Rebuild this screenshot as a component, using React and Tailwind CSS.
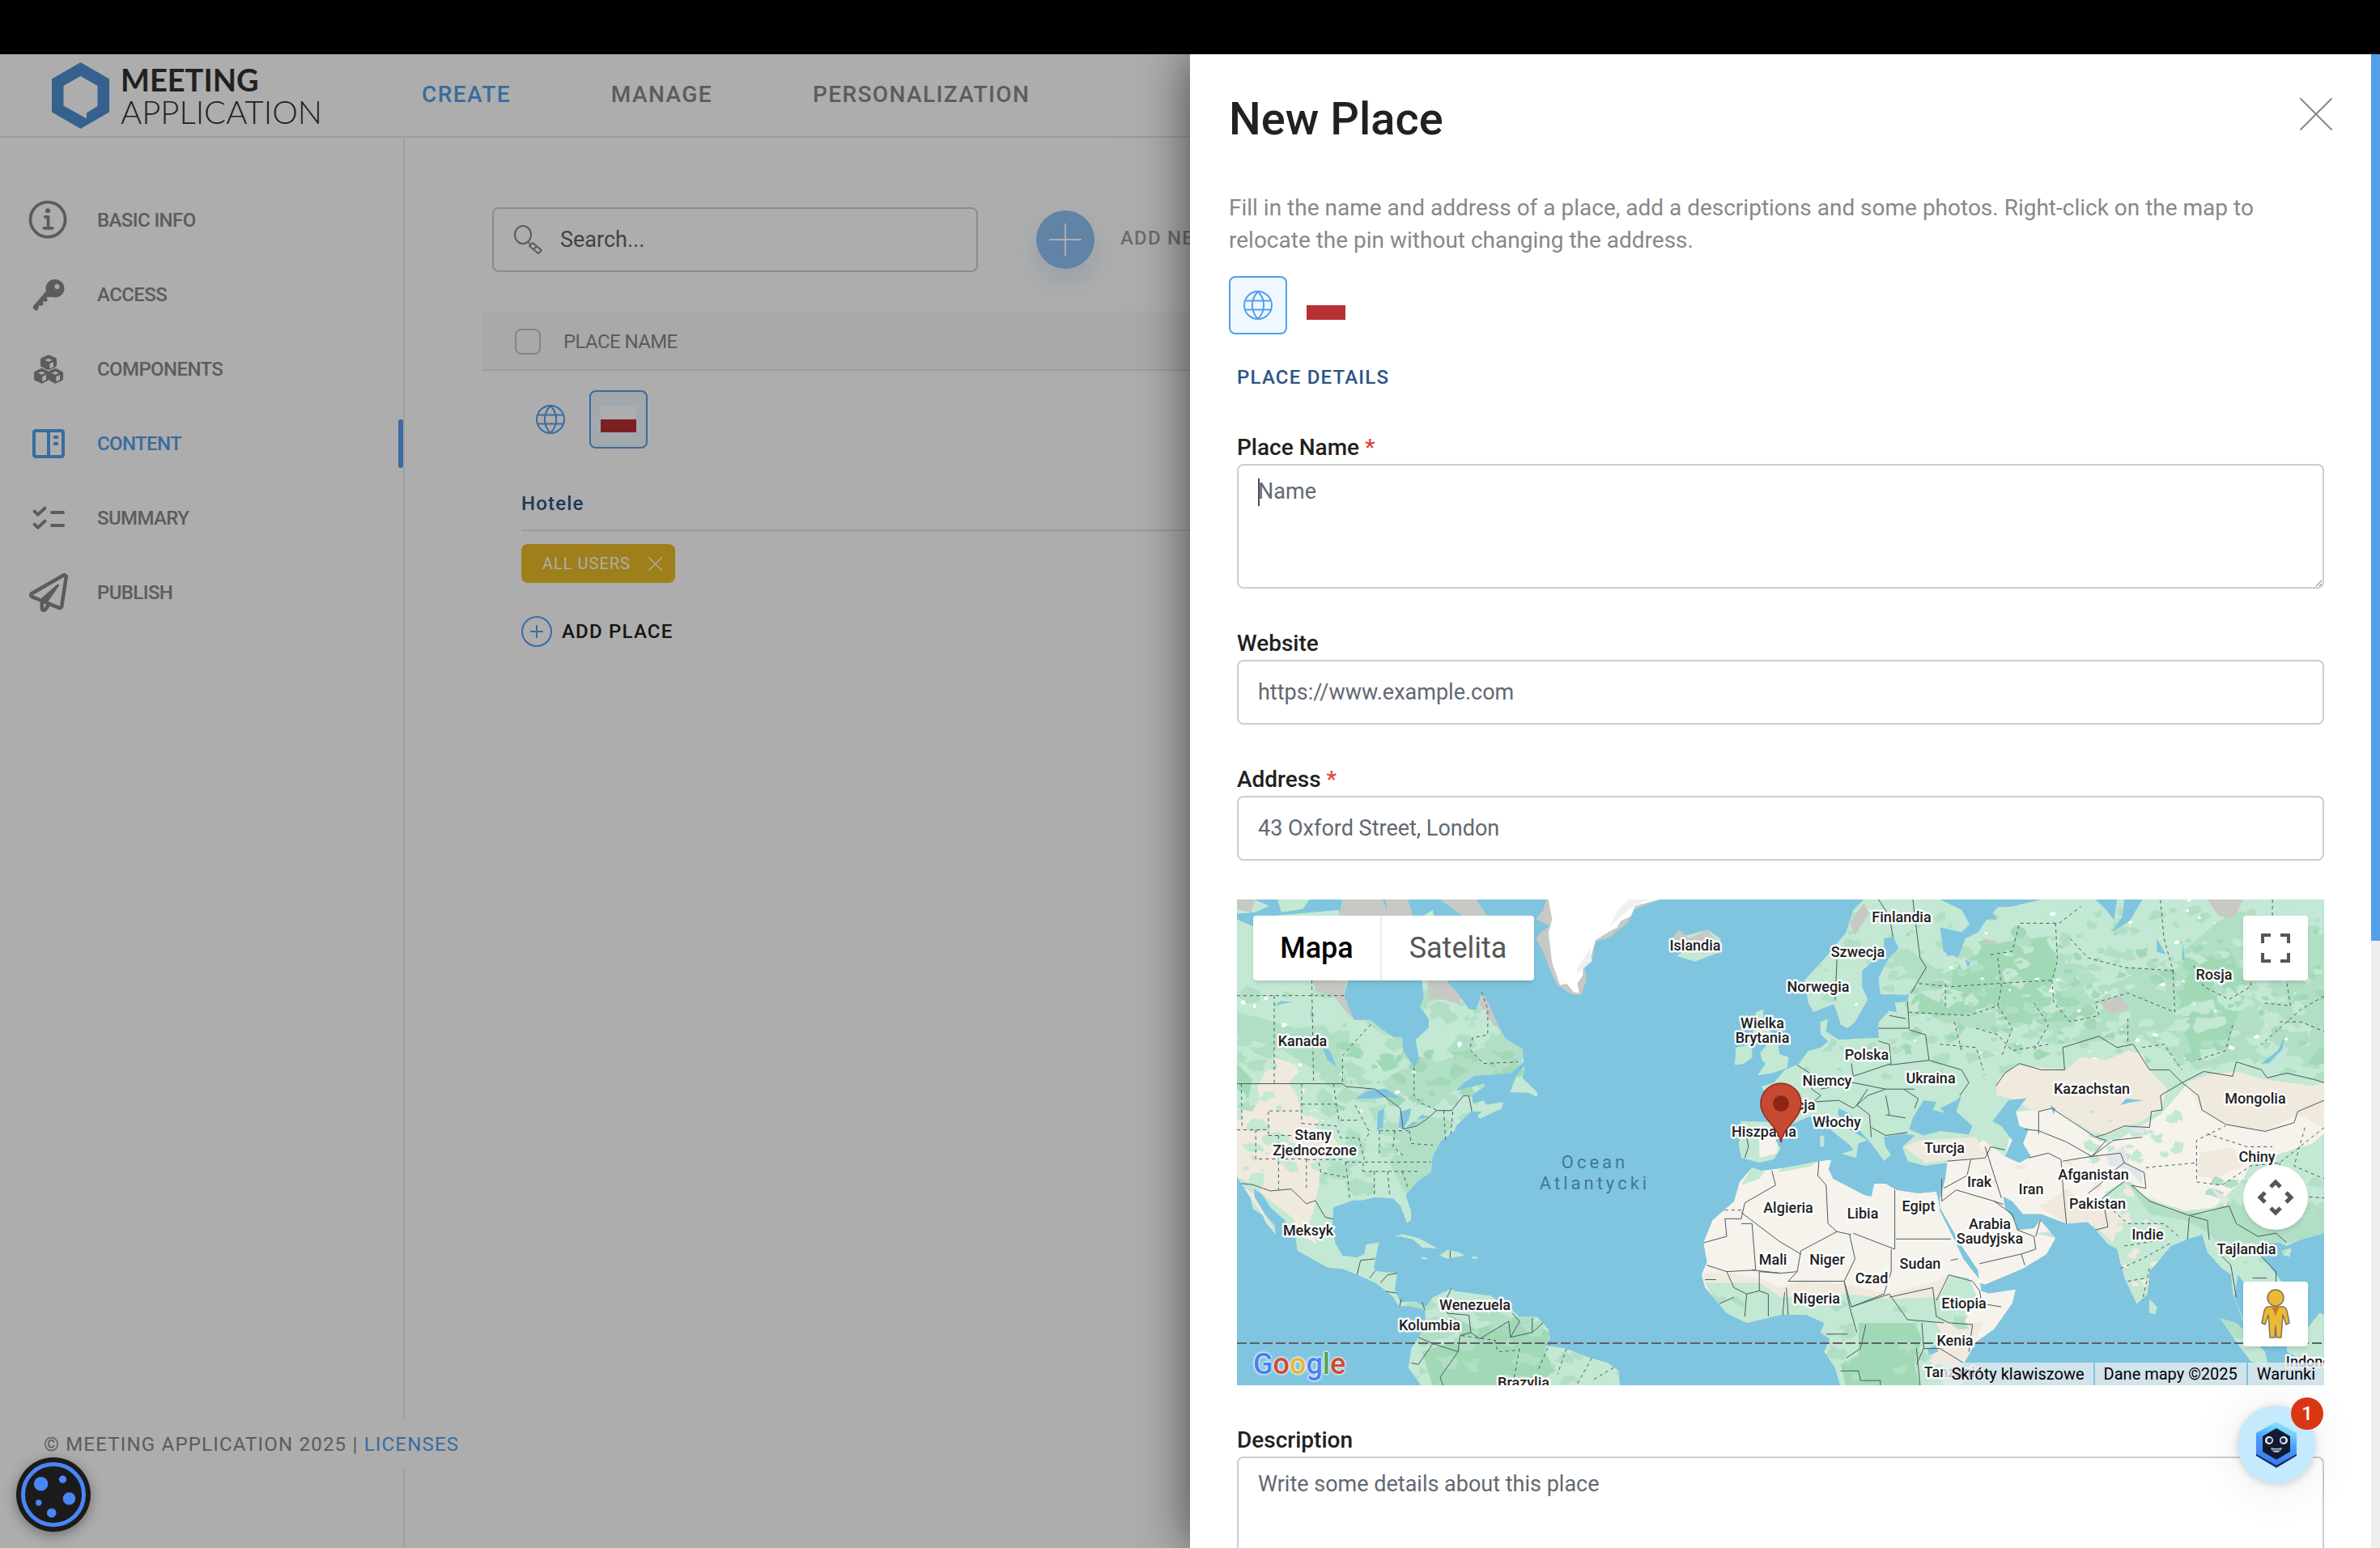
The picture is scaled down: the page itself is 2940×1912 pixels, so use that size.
import React from "react";
import { IoInformationCircleOutline, IoKey } from "react-icons/io5";
import { FaRegPaperPlane } from "react-icons/fa";
import { BiBookContent } from "react-icons/bi";

const ChecksIcon = () => (
    <svg width="40" height="30" viewBox="0 0 120 90" fill="none" stroke="currentColor" strokeWidth="12" strokeLinecap="round" strokeLinejoin="round">
        <path d="M8 20l12 12 26-24M8 68l12 12 26-24" />
        <path d="M72 24h42M72 72h42" />
    </svg>
);

const CubesIcon = () => (
    <svg width="36" height="36" viewBox="0 0 108 108" fill="currentColor" fillRule="evenodd">
        <path d="M50 2q4-2 8 0l22 10q4 2 4 6v22q0 4-4 6L58 56q-4 2-8 0L28 46q-4-2-4-6V18q0-4 4-6zM40 20l14 6 14-6-14-6zM58 34v18l14-7V27z" />
        <path d="M25 52q4-2 8 0l18 9q3 2 3 5v24q0 4-3 6l-18 10q-4 2-8 0L4 96q-4-2-4-6V68q0-4 4-6zM15 68l13 6 14-6-14-6zM31 82v18l14-7V75z" />
        <path d="M75 52q4-2 8 0l21 10q4 2 4 6v22q0 4-4 6l-21 10q-4 2-8 0L57 96q-3-2-3-6V66q0-3 3-5zM65 68l14 6 13-6-13-6zM82 82v18l14-7V75z" />
    </svg>
);

const GlobeIcon = () => (
    <svg width="38" height="38" viewBox="0 0 38 38" fill="none" stroke="currentColor" strokeWidth="2">
        <circle cx="19" cy="19" r="17" />
        <path d="M19 2C9.500 12 9.500 26 19 36M19 2c9.500 10 9.500 24 0 34M3.500 13.500h31M3.500 24.500h31" />
    </svg>
);

const SearchIcon = () => (
    <svg width="36" height="36" viewBox="0 0 36 36" fill="none" stroke="currentColor" strokeWidth="2" strokeLinejoin="round">
        <ellipse cx="12" cy="12" rx="10" ry="11" />
        <path d="M18 20l3 4M20 26l4-4 11 9-4 4zM25 30l4-4" />
    </svg>
);

const CloseIcon = ({ size, stroke }) => (
    <svg width={size} height={size} viewBox="0 0 40 40" fill="none" stroke="currentColor" strokeWidth={stroke} strokeLinecap="round">
        <path d="M1 1l38 38M39 1L1 39" />
    </svg>
);

const Logo = () => (
    <a href="#" className="flex w-[457px] shrink-0 items-center gap-[14px] text-[#323232]">
        <svg width="71" height="82" viewBox="0 0 71 82">
            <path fill="#4e90d2" fillRule="evenodd" d="M35.500 0L71 20.500v41L35.500 82 0 61.500v-41zM35.500 17L14.500 29v24.500L43 69.500v-7L56.500 54V29z" />
        </svg>
        <span className="flex flex-col font-[Lato,sans-serif] leading-10">
            <span className="text-[38px] font-bold">MEETING</span>
            <span className="text-[40px] font-light">APPLICATION</span>
        </span>
    </a>
);

const NAV = [
    { label: "CREATE", active: true },
    { label: "MANAGE" },
    { label: "PERSONALIZATION" },
];

const MENU = [
    { label: "BASIC INFO", icon: <IoInformationCircleOutline size={60} className="shrink-0" /> },
    { label: "ACCESS", icon: <IoKey size={49} /> },
    { label: "COMPONENTS", icon: <CubesIcon /> },
    { label: "CONTENT", icon: <BiBookContent size={48} />, active: true },
    { label: "SUMMARY", icon: <ChecksIcon /> },
    { label: "PUBLISH", icon: <FaRegPaperPlane size={48} /> },
];

const Header = () => (
    <header className="flex h-[103px] shrink-0 items-center border-b-2 border-[#e6e6e6] pl-16">
        <Logo />
        <nav className="flex gap-31 pb-0.5 text-[28px] font-medium tracking-wider text-[#888888]">
            {NAV.map((item) => (
                <a key={item.label} href="#" className={item.active ? "text-[#539fea]" : ""}>{item.label}</a>
            ))}
        </nav>
    </header>
);

const Sidebar = () => (
    <aside className="w-[500px] shrink-0 border-r-2 border-[#ebebeb] pt-[72px]">
        <ul className="flex flex-col gap-8">
            {MENU.map((item) => (
                <li key={item.label}>
                    <a href="#" className={item.active ? "flex h-[60px] items-center justify-between text-[#539fea]" : "flex h-[60px] items-center justify-between text-[#888888]"}>
                        <span className="flex items-center gap-9 pl-9 text-2xl font-medium tracking-tight">
                            <span className="flex w-12 justify-center">{item.icon}</span>
                            {item.label}
                        </span>
                        {item.active && <span className="h-[60px] w-1.5 rounded-full bg-[#539fea]"></span>}
                    </a>
                </li>
            ))}
        </ul>
    </aside>
);

const Places = () => (
    <main className="min-w-0 flex-1 pt-[86px] pl-24">
        <div className="flex items-center pl-3">
            <label className="flex h-20 w-[600px] items-center gap-[22px] rounded-lg border-2 border-[#c8ced3] pl-6 text-[#888888]">
                <SearchIcon />
                <input type="text" aria-label="Search" placeholder="Search..." className="min-w-0 flex-1 text-[27px] outline-none placeholder:text-[#5f646d]" />
            </label>
            <button aria-label="Add" className="ml-[72px] flex size-[72px] items-center justify-center rounded-full bg-[#8fc2f3] text-white shadow-[0_16px_32px_rgba(83,159,234,0.2)]">
                <svg width="40" height="40" viewBox="0 0 40 40" stroke="currentColor" strokeWidth="2"><path d="M20 0v40M0 20h40" /></svg>
            </button>
            <span className="ml-8 pb-1 text-2xl font-medium tracking-wider whitespace-nowrap text-[#a0a0a0]">ADD NEW</span>
        </div>

        <table className="mt-12 w-full border-collapse text-left">
            <thead>
                <tr className="h-[73px] border-b-2 border-[#e6e6e6] bg-[#f9f9f9]">
                    <th className="w-[100px] pt-1 pl-10">
                        <input type="checkbox" aria-label="Select all" className="block size-8 appearance-none rounded-lg border-2 border-[#c5c5c5]" />
                    </th>
                    <th className="pt-1 text-2xl font-normal tracking-tight text-[#888888]">PLACE NAME</th>
                </tr>
            </thead>
            <tbody>
                <tr>
                    <td colSpan={2} className="pt-6 pl-12">
                        <div className="flex gap-3">
                            <button aria-label="Default language" className="flex size-[72px] items-center justify-center text-[#539fea]"><GlobeIcon /></button>
                            <button aria-label="Polski" className="flex size-[72px] items-center justify-center rounded-lg border-2 border-[#539fea] bg-[#f0f8ff]">
                                <span className="flex h-8 w-11 flex-col justify-end bg-white"><span className="h-4 bg-[#b72e34]"></span></span>
                            </button>
                        </div>
                        <h2 className="mt-[52px] border-b-2 border-[#e6e6e6] pb-4 text-2xl leading-8 font-medium tracking-wider text-[#2c5585]">Hotele</h2>
                        <span className="mt-4 flex h-12 w-[190px] items-center justify-between rounded-lg bg-[#ebbc28] pr-4 pl-[26px] text-xl tracking-wider text-white">
                            ALL USERS
                            <button aria-label="Remove"><CloseIcon size={17} stroke={3} /></button>
                        </span>
                        <button className="mt-10 flex h-10 items-center gap-3 text-2xl font-medium tracking-wider text-[#212121]">
                            <svg width="38" height="38" viewBox="0 0 38 38" fill="none" stroke="#539fea" strokeWidth="2"><circle cx="19" cy="19" r="18" /><path d="M19 11v16M11 19h16" /></svg>
                            ADD PLACE
                        </button>
                    </td>
                </tr>
            </tbody>
        </table>
    </main>
);

// Coastlines, west half and east half use their own origin
const AMERICA = "M18 90L60 110 120 78 300 60 325 280 315 330 342 403 388 403 415 430 452 458 475 458 478 500 508 553 522 530 512 465 548 428 548 400 525 365 535 335 530 290 530 80 560 60 600 285 635 330 660 370 680 372 695 318 715 355 745 430 760 460 808 495 812 535 775 570 720 575 675 578 640 605 625 625 700 603 705 610 668 640 672 665 700 655 708 668 755 660 752 680 690 713 683 705 695 690 665 690 625 735 620 750 580 785 560 830 555 880 520 905 485 950 500 1000 500 1030 488 1038 470 985 450 962 400 958 365 968 340 968 285 990 283 1050 290 1100 310 1140 350 1145 370 1135 375 1105 412 1098 405 1130 398 1175 400 1188 462 1195 455 1245 470 1285 510 1283 540 1300 560 1270 612 1242 620 1250 720 1265 780 1310 798 1330 850 1332 880 1370 885 1400 870 1420 930 1430 985 1455 1045 1475 1075 1500 1078 1550 530 1550 492 1490 500 1430 520 1395 540 1360 538 1310 500 1298 465 1298 450 1270 430 1250 400 1225 350 1200 310 1182 270 1178 185 1125 180 1085 150 1030 110 990 88 950 65 930 68 960 95 1010 122 1045 126 1075 95 1035 90 1015 62 995 55 960 38 930 18 895zM775 625L790 580 815 545 808 585 850 630 848 645 825 632 770 630zM450 1083L475 1072 520 1085 575 1118 530 1115 505 1090 470 1080zM578 1140L600 1122 630 1128 650 1140 600 1150zM525 1145l15 0 8 7-18 0zM668 1143h16v7h-16zM1222 150L1240 122 1260 140 1320 122 1357 150 1350 195 1285 222 1235 205 1250 190 1225 175zM18 28h50l40 20-40 20-50 5zM130 28h90l-20 30-60 10zM310 28h110l20 50H300zM430 28h60l15 50h-70zM580 28h100l30 50h-70z";
const EURASIA = "M-110 835L-118 790-105 750-113 720-30 722 0 728-15 700-20 660-40 640-55 612-20 600 10 560 50 540 75 500 110 490 130 470 110 450 108 410 130 400 125 440 160 465 270 460 270 410 300 375 320 380 315 350 350 345 355 325 275 325 270 270 300 210 325 180 310 145 285 150 285 190 225 250 225 300 240 340 205 410 185 430 165 420 155 380 145 355 90 380 75 350 65 280 130 200 180 130 200 60 230 28H1503V1070L1440 1090 1400 1110 1380 1100 1330 1100 1320 1130 1350 1170 1385 1220 1380 1250 1330 1290 1290 1240 1265 1200 1255 1270 1280 1340 1310 1370 1280 1350 1250 1260 1245 1200 1220 1180 1180 1130 1165 1075 1125 1090 1080 1110 1020 1190 1015 1260 985 1292 950 1210 930 1120 905 1105 870 1060 850 1035 790 1040 720 1010 670 1010 640 970 615 955 620 990 650 1035 655 1060 700 1055 718 1030 760 1085 735 1135 670 1180 565 1230 550 1225 545 1185 500 1110 440 990 440 960 455 900 460 850 400 860 350 845 335 800 370 765 340 760 285 770 290 800 305 825 285 845 250 790 210 740 195 700 160 680 158 700 190 745 240 780 215 790 208 835 165 822 200 810 190 795 130 740 95 700 60 715 30 730-15 780 0 805-20 840-60 850zM1018 1318L1020 1275 1042 1300 1035 1325zM1215 1335L1260 1350 1340 1440 1350 1490 1300 1470 1260 1410zM1400 1400L1455 1370 1490 1318 1503 1325V1480L1440 1465 1400 1440zM108 765h12v35h-12zM110 715l8-5v35l-8-5zM1385 1125l28-10-5 30-18-5zM-58 505L-33 475-8 480-3 510 22 520 17 555-23 570-65 578-43 540-53 530zM-128 545L-125 490-83 480-78 520-103 542zM-70 380L-48 370-50 410-30 430-20 480-60 480-78 440z";
const AFRICA = "M-80 865L-55 875-20 870 15 865 105 845 140 840 132 870 145 900 230 950 250 955 258 915 290 915 320 935 380 945 430 940 437 970 440 1000 480 1090 505 1150 550 1215 555 1250 575 1258 650 1245 640 1290 590 1370 540 1410 520 1450 500 1490 505 1550H165L150 1490 120 1440 135 1400 110 1380 120 1350 70 1325 0 1325-95 1350-150 1320-210 1240-220 1200-205 1160-215 1100-190 1030-130 970-115 910z";
const GREENLAND = "M875 28L1190 28 1160 40 1115 60 1100 100 1050 145 1010 160 1000 220 980 240 985 280 970 325 945 325 905 295 885 250 865 190 845 150 860 130 885 110 845 90 865 60z";

// Pseudo random vegetation patches, the same on every render
const patches = (count, x, y, w, h, size, seed) => {
    let s = seed;
    const next = () => {
        s = (s * 16807) % 2147483647;
        return s / 2147483647;
    };
    let d = "";
    for (let i = 0; i < count; i++) {
        const cx = x + next() * w;
        const cy = y + next() * h;
        const r = size * (0.3 + next());
        for (let k = 0; k < 7; k++) {
            const a = (k / 7) * Math.PI * 2;
            const q = r * (0.35 + next() * 0.9);
            d += (k ? "L" : "M") + Math.round(cx + Math.cos(a) * q * 1.3) + " " + Math.round(cy + Math.sin(a) * q);
        }
        d += "z";
    }
    return d;
};

const MAP_LABELS = [
    ["Kanada", 81, 175], ["Stany", 94, 291], ["Zjednoczone", 96, 310], ["Meksyk", 88, 409],
    ["Wenezuela", 294, 501], ["Kolumbia", 238, 526], ["Brazylia", 354, 597], ["Islandia", 566, 57],
    ["Finlandia", 821, 22], ["Szwecja", 767, 65], ["Norwegia", 718, 108], ["Rosja", 1207, 93],
    ["Wielka", 649, 153], ["Brytania", 649, 171], ["Polska", 778, 192], ["Niemcy", 729, 224],
    ["Ukraina", 857, 221], ["Francja", 685, 254], ["Włochy", 741, 275], ["Hiszpania", 651, 287],
    ["Turcja", 874, 307], ["Kazachstan", 1056, 234], ["Mongolia", 1258, 246], ["Chiny", 1260, 318],
    ["Irak", 917, 349], ["Iran", 981, 358], ["Afganistan", 1058, 340], ["Pakistan", 1063, 376],
    ["Arabia", 930, 401], ["Saudyjska", 930, 419], ["Egipt", 842, 379], ["Libia", 773, 388],
    ["Algieria", 681, 381], ["Indie", 1125, 414], ["Tajlandia", 1247, 432], ["Mali", 662, 445],
    ["Niger", 729, 445], ["Czad", 784, 468], ["Sudan", 844, 450], ["Nigeria", 716, 493],
    ["Etiopia", 898, 499], ["Kenia", 887, 545], ["Tanzania", 885, 584], ["Indonezja", 1335, 571],
];

const WorldMap = () => (
    <svg viewBox="0 0 1343 600" preserveAspectRatio="xMidYMid slice" className="block h-full w-full">
        <defs>
            <clipPath id="america"><path d={AMERICA} /></clipPath>
            <clipPath id="eurasia"><path d={EURASIA} /></clipPath>
            <clipPath id="africa"><path d={AFRICA} /></clipPath>
        </defs>
        <rect width="1343" height="600" fill="#7fc5e0" />

        <g transform="translate(-8 -11) scale(.4464 .3955)">
            <g clipPath="url(#america)">
                <path d={AMERICA} fill="#c3e8d3" />
                <path fill="#b1dfc5" d="M18 380L90 400 180 430 260 420 300 480 320 600 420 600 470 560 560 540 700 490 812 500 800 570 640 600 560 680 480 640 420 600 310 600 230 560 150 500 18 450zM530 700L620 720 560 830 555 890 480 940 440 850 480 760z" />
                <path d={patches(150, 18, 280, 800, 700, 26, 71)} fill="#b1dfc5" />
                <path d={patches(40, 300, 480, 500, 200, 20, 15)} fill="#a1d9b7" />
                <path fill="#a1d9b7" d="M600 1320L680 1370 790 1330 885 1380 870 1440 900 1500 830 1550 560 1550 530 1440 640 1400zM18 540L60 590 50 650 18 640z" />
                <path d={patches(60, 490, 1260, 600, 290, 22, 33)} fill="#b1dfc5" />
                <path fill="#f0e9dd" d="M75 610L100 560 130 555 120 520 150 530 180 545 190 565 160 600 185 640 195 700 235 680 250 700 235 740 285 765 300 800 250 850 245 920 230 1000 218 1040 240 1105 200 1080 170 1020 100 960 60 915 18 895 18 680 60 690 80 650zM38 930L126 1075 60 940z" />
                <path d={patches(34, 18, 640, 260, 300, 18, 9)} fill="#c3e8d3" />
                <path fill="#c8c8c4" d="M225 280L320 282 315 330 342 400 325 385 290 335 240 315zM545 282L610 285 637 330 635 355 590 340 550 340zM686 350L700 318 740 400 745 435 715 400zM18 28h50l-10 40-40-10zM310 28h110l20 50H300zM430 28h60l15 50h-70zM580 28h100l30 50h-70zM1222 150L1240 122 1270 150 1320 122 1340 150 1300 190z" />
                <path d={patches(26, 18, 330, 700, 500, 7, 40)} fill="#ffffff" />
                <path fill="#7fc5e0" d="M345 650L380 625 430 618 470 650 440 645 395 650zM405 750L408 690 425 680 422 740zM470 690L500 680 495 710 478 745 465 740zM480 745L520 725 505 722zM515 715L550 708 530 700zM255 490L275 500 293 548 268 530zM118 360L140 345 175 348 150 352zM222 370l10 20-8 10z" />
            </g>
            <path d={GREENLAND} fill="#c8c8c4" />
            <path fill="#ffffff" d="M880 28L1185 28 1120 48 1108 80 1080 95 1070 115 1045 130 1010 155 998 205 975 235 975 265 960 290 965 320 950 318 930 290 912 295 890 225 885 180 880 130 890 90z" />
            <path fill="#eef0f1" d="M1100 28h60l-50 25-60 60 20-50zM960 240l35-60 5 40-40 40z" />
            <g fill="none" stroke="#4b5a60" strokeWidth="1">
                <path vectorEffect="non-scaling-stroke" d="M18 603H310L320 612 400 620 470 680 478 745 515 735 545 712 570 687 612 687 645 640 660 642 668 690M30 915L60 918 110 938 168 932 210 978 235 968 262 1020 285 1026M350 1200L360 1155 400 1150M385 1210L400 1188M415 1225L435 1200 462 1195M430 1252l30 5M468 1298l5-22M530 1285l8 25M612 1242L590 1290 600 1320 660 1326 665 1380 635 1390 630 1440 560 1415 520 1480 500 1475M665 1380L690 1400 770 1345 775 1395 835 1380 865 1350M780 1320L800 1345 775 1395M835 1335V1380M520 1395L560 1415M630 1440L580 1520 590 1550M608 1125v22" />
                <path vectorEffect="non-scaling-stroke" strokeDasharray="4 4" d="M18 328H315M121 328V603M225 280L230 603M388 418L310 515V603M508 553V640L530 665 570 685M695 318L712 370V450L670 460 662 495 700 540 795 535M30 603L32 745M18 747H105M105 690V765M108 688H197M197 603V727M197 667H292M70 747V838H210M133 765V935M105 765H210M285 603L300 717H360M197 727L292 735 305 772H355M210 838V928M210 840H318M245 850L250 880 318 895M318 848H555M318 848L325 905 330 968M355 772L370 835 365 875M345 670L385 755 372 780M412 750V830M412 750H495M495 750L500 790 560 795M365 877H525M398 877V950M435 877L440 948M475 877L490 925M455 750L450 800 480 830M590 687L595 780M615 690L610 760M800 1430L780 1550M730 1405L740 1440 800 1435M640 1390L735 1405M885 1410L850 1500M930 1430L905 1510M1000 1460L960 1540M1060 1490l-60 40" />
            </g>
        </g>

        <g transform="translate(672 -11) scale(.4464 .3955)">
            <g clipPath="url(#eurasia)">
                <path d={EURASIA} fill="#c3e8d3" />
                <path fill="#b1dfc5" d="M280 200L350 180 450 260 600 180 800 200 900 300 1100 200 1250 60 1503 120V560L1300 520 1150 560 1000 460 760 480 500 420 360 400z" />
                <path fill="#a1d9b7" d="M480 200L620 160 760 140 760 280 800 400 660 430 560 380 380 400 350 330 470 310zM1130 230L1240 180 1290 300 1240 470 1140 520 1100 380z" />
                <path d={patches(240, 200, 28, 1300, 520, 24, 5)} fill="#c3e8d3" />
                <path d={patches(200, 60, 60, 1440, 520, 18, 8)} fill="#b1dfc5" />
                <path d={patches(90, 350, 120, 1150, 420, 17, 22)} fill="#a1d9b7" />
                <path d={patches(50, 180, 28, 1300, 500, 6, 77)} fill="#ffffff" />
                <path fill="#f6f3ec" d="M-60 780L-10 760-10 820-60 835zM650 690L760 680 870 770 930 780 1050 700 1120 610 1503 680V760L1470 790 1300 850 1280 900 1200 990 1120 1000 1010 960 960 900 900 940 860 1050 700 1070 780 1090 720 1160 545 1240 420 980 455 850 560 780 620 830z" />
                <path fill="#f0e9dd" d="M600 590L650 545 790 560 830 520 900 530 960 500 1000 510 1020 560 1070 620 1050 680 1000 720 950 740 880 770 760 680 700 690 640 650 595 640zM1120 600L1180 575 1260 565 1340 590 1470 610 1503 600V740L1430 700 1340 750 1230 730 1160 680zM340 800L380 780 540 770 560 830 400 850zM790 1040L720 990 790 930 840 980 940 1000 920 1100 860 1040zM1160 820L1250 800 1280 860 1200 900 1150 890z" />
                <path d={patches(36, 560, 800, 480, 240, 12, 31)} fill="#f0e9dd" />
                <path d={patches(24, 930, 1000, 110, 240, 12, 17)} fill="#f0e9dd" />
                <path d={patches(26, 860, 690, 240, 150, 16, 13)} fill="#c3e8d3" />
                <path fill="#b1dfc5" d="M950 900L1000 950 1080 1000 1180 1010 1240 970 1260 1040 1200 1080 1120 1030 1020 1010zM1250 960L1340 1060 1503 1000V1100H1200z" />
                <path d={patches(46, 1190, 880, 310, 320, 20, 90)} fill="#b1dfc5" />
                <path fill="#c8c8c4" d="M1180 28h100l-30 60-40-10zM540 120L560 150 600 160 570 170zM880 345L940 330 965 370 910 385zM190 100l40-60 15 30-40 70z" />
                <path fill="#e3e6e8" d="M900 830L950 795 960 850 1000 880 1000 920 960 870 910 860zM960 745L1020 730 1000 760zM1190 930L1240 960 1230 990z" />
                <g fill="#7fc5e0">
                    <path d="M440 28H720L640 50 600 52 570 90 545 130 510 150 490 210 450 190 440 115 500 130 522 105 500 60zM565 45L600 90 570 90zM870 28H930L922 92 900 60zM950 28L945 80 915 130 965 95 1000 28zM1040 150L1065 200 1040 190zM1112 160L1118 220 1110 215z" />
                    <path d="M355 745L365 710 395 655 430 660 420 685 455 695 440 680 485 655 500 640 485 690 530 735 520 762 440 750 395 765zM600 700L630 655 680 648 650 690 660 735 685 745 670 790 692 830 660 850 620 830 640 780 610 735 585 720zM1395 450L1388 495 1350 540 1328 540 1375 500zM940 670L955 650 1005 655 965 662zM745 670l15 10-5 20zM450 175L490 165 495 195 460 205zM510 215l15 10-8 15z" />
                </g>
            </g>
            <g clipPath="url(#africa)">
                <path d={AFRICA} fill="#f6f3ec" />
                <path fill="#c3e8d3" d="M-80 865L-40 870-60 900-110 920zM15 855L105 845 80 862-10 880zM-215 1215L-140 1205-50 1230 0 1260 60 1250 180 1250 300 1275 420 1250 460 1200 520 1210 550 1290 480 1350 430 1400 420 1480 520 1470 505 1550H165L100 1370-150 1360z" />
                <path fill="#a1d9b7" d="M215 1350L370 1350 390 1400 370 1480 385 1550 180 1550 165 1480 215 1450z" />
                <path fill="#f0e9dd" d="M-215 1195L-140 1195-50 1215 0 1240 60 1215 180 1230 300 1260 430 1220 470 1200 440 1270 300 1275 180 1260 0 1270-60 1225-215 1225zM430 1350L560 1350 520 1450 480 1490 410 1470 450 1400z" />
                <path d={patches(40, -200, 1270, 700, 270, 18, 61)} fill="#b1dfc5" />
                <path fill="#7fc5e0" d="M405 1430l25-10 5 20-25 10z" />
            </g>
            <path fill="#b1dfc5" d="M1215 1335L1260 1350 1300 1400 1260 1400z" />
            <g fill="none" stroke="#4b5a60" strokeWidth="1">
                <path vectorEffect="non-scaling-stroke" d="M155 215L150 340M270 28L300 80 310 145M365 28L370 80 385 210 402 240 360 320M350 345L355 430 270 430M300 390L345 400M270 470L300 480 305 540 200 580 195 540M355 435L400 450 410 530 300 545M110 620L200 600 290 620 370 620M45 545L80 570 85 620 110 640 90 660 160 655 200 680 240 640 290 620M240 620L210 670 245 700 250 770M290 700L345 710M250 740L290 765 350 755M290 640L300 700M340 620L380 650 370 680M410 530L500 560 520 600 495 640M-95 770L-90 800-100 835" />
                <path vectorEffect="non-scaling-stroke" d="M595 610L620 570 660 540 720 560 785 560 780 490 880 455 930 490 975 480 1020 560 1075 560 1110 600 1050 640 1055 685 1025 690 1020 740 950 735 900 760 870 770M1110 600L1170 565 1250 580 1260 535 1330 560 1345 585 1400 570 1475 590 1503 600M1110 600L1155 640 1165 685 1230 730 1340 752 1420 725 1430 690 1503 655M713 760V690L750 680 870 770 900 780 860 830 790 785 713 750 675 745M685 835L740 820 775 840 780 920 790 1040M780 845L860 830 940 820 950 850M860 830L920 780 1000 770M850 945L880 920 915 880 950 850 1005 880 1010 930 970 920 1020 970 1130 1015 1240 985M870 1060L905 1050 890 960 960 900M1130 1015L1180 1030 1185 1090M1130 1020L1125 1090M1240 985L1260 1040 1320 1080 1370 1070 1400 1100M1210 1130L1245 1170 1260 1270M1310 1120L1370 1190 1370 1240M1305 1210h40" />
                <path vectorEffect="non-scaling-stroke" d="M460 845L565 835 580 800 620 810M525 840L515 890 450 930M445 900V970L485 935 590 970 615 980M565 800L610 960M590 970L640 1010 655 1060 700 1080 705 1120 665 1135 550 1165M665 1135L675 1170M718 1030L705 1080" />
                <path vectorEffect="non-scaling-stroke" d="M105 845L102 890 125 920 130 1040 155 1065 195 1075M155 1065L55 1125 45 1190 0 1195-80 1185M-110 1005L-5 1095 55 1135M-25 875L-15 920-100 975-110 1025-155 1025-150 1080-215 1100M-110 1040H-80L-70 1185-150 1190-205 1170M315 935V1120L200 1070M318 1088H470M305 1120V1190L285 1260 195 1300 175 1220 205 1150 190 1075M45 1190L20 1220 175 1220M15 1240L20 1325M175 1220L190 1300 210 1380M195 1300L300 1260 350 1340 450 1350M300 1270L420 1240 430 1330 465 1350 530 1355M465 1200L430 1280M465 1200L530 1220 550 1250 555 1290 610 1300M470 1155L490 1150M390 1350L395 1430 440 1430 505 1475M375 1430L385 1545M235 1355L220 1430 180 1460M125 1385H185M165 1500H215L220 1530H275V1545M530 1355L520 1440M-210 1215H-180M-150 1190L-130 1240-95 1260-60 1250-60 1190 0 1195M-95 1260L-100 1330M-60 1250L-35 1260-35 1330M10 1255L5 1325M-170 1290L-130 1270M395 1430L375 1480" />
                <path vectorEffect="non-scaling-stroke" strokeDasharray="4 4" d="M580 200L640 190 660 102 770 102 830 50M760 102L765 220 750 280 600 290 470 300 380 290M800 150L850 210 950 240 1085 250 1060 150 1050 28M600 210L610 300 600 360 520 390 355 380M750 280L755 350 800 410 880 390 870 350 960 320 1090 380 1085 250M700 350L740 420 700 500M600 360L640 430 610 520M455 290V370M1360 28V180L1300 260 1300 300 1240 340 1170 300 1140 230M1400 290L1410 360 1330 350M1250 420L1230 500 1150 530M960 400V480M1000 490L1060 480 1110 560M1503 330L1440 370 1330 480M440 480L540 490 560 560M480 410L500 500M540 430L600 450 640 500 740 480M1010 865L1150 850 1150 780 1230 735M1150 850L1150 910 1220 920 1300 860 1380 850 1503 740M1180 760L1290 800 1360 800M1380 850L1390 950 1503 960M1450 740L1420 860 1503 900M1410 940L1400 1060M920 1000L960 1040 1060 1040 1100 1080M950 1110L1060 1090M940 1180L1000 1150 1080 1100M960 1220L1010 1210M1380 410H1440L1503 440M1020 1180L1000 1280M-155 998H-110" />
            </g>
        </g>

        <path d="M0 548H1343" stroke="#5f5f66" strokeWidth="2" strokeDasharray="12 4" />

        <g className="fill-[#202124] stroke-white/90 text-[18px] font-medium [paint-order:stroke]" strokeWidth="5" strokeLinejoin="round" textAnchor="middle">
            {MAP_LABELS.map(([name, x, y]) => (
                <text key={name} x={x} y={y + 6}>{name}</text>
            ))}
        </g>
        <g className="fill-[#42779b] text-[22px] tracking-[4px]" textAnchor="middle">
            <text x="442" y="332">Ocean</text>
            <text x="442" y="358">Atlantycki</text>
        </g>

        <path d="M672 300c-3-20-25-29-25-48a25 25 0 0150 0c0 19-22 28-25 48z" fill="#c64a32" stroke="#96281b" strokeWidth="1.500" />
        <circle cx="672" cy="252" r="10" fill="#8c2517" />
    </svg>
);

const Map = () => (
    <div className="relative h-[600px] overflow-hidden">
        <WorldMap />
        <div className="absolute top-5 left-5 flex h-20 overflow-hidden rounded bg-white text-4xl shadow-md">
            <button className="w-[157px] font-medium text-black">Mapa</button>
            <button className="w-[190px] border-l-2 border-[#ececec] text-[#565656]">Satelita</button>
        </div>
        <button aria-label="Fullscreen" className="absolute top-5 right-5 flex size-20 items-center justify-center rounded bg-white text-[#565656] shadow-md">
            <svg width="36" height="36" viewBox="0 0 36 36" fill="none" stroke="currentColor" strokeWidth="4"><path d="M2 12V2h10M24 2h10v10M34 24v10H24M12 34H2V24" /></svg>
        </button>
        <div className="absolute right-5 bottom-12 flex flex-col gap-16">
            <button aria-label="Camera" className="flex size-20 items-center justify-center rounded-full bg-white text-[#565656] shadow-md">
                <svg width="48" height="48" viewBox="0 0 48 48" fill="none" stroke="currentColor" strokeWidth="5"><path d="M18 11l6-6 6 6M18 37l6 6 6-6M11 18l-6 6 6 6M37 18l6 6-6 6" /></svg>
            </button>
            <button aria-label="Street View" className="flex size-20 items-center justify-center rounded bg-white shadow-md">
                <svg width="36" height="62" viewBox="0 0 36 62" fill="#ebb932" stroke="#7d7460" strokeWidth="1.500" strokeLinejoin="round">
                    <path d="M9 22h18c3 0 4 2 5 5l3 15-4 2-4-12-1 12-1 16h-6l-1-14-1 14h-6L10 44 9 32 5 44l-4-2 3-15c1-3 2-5 5-5z" />
                    <circle cx="18" cy="11" r="10" />
                    <path d="M13 22h10l-5 11z" fill="#c97b2b" stroke="none" />
                </svg>
            </button>
        </div>
        <a href="#" aria-label="Google" className="absolute bottom-1 left-5 text-4xl leading-[44px] font-medium [text-shadow:0_0_3px_#fff,0_0_3px_#fff,0_0_2px_#fff]">
            <span className="text-[#4a80f0]">G</span><span className="text-[#cf4a36]">o</span><span className="text-[#ebb530]">o</span><span className="text-[#4a80f0]">g</span><span className="text-[#56a055]">l</span><span className="text-[#cf4a36]">e</span>
        </a>
        <div className="absolute right-0 bottom-0 flex h-7 gap-0.5 text-xl leading-7 text-black">
            <button className="bg-[#e6eaee]/80 px-[11px]">Skróty klawiszowe</button>
            <span className="bg-[#e6eaee]/80 px-[11px]">Dane mapy ©2025</span>
            <a href="#" className="bg-[#e6eaee]/80 px-[11px]">Warunki</a>
        </div>
    </div>
);

const Field = ({ id, label, required, children }) => (
    <div className="mb-12 flex flex-col">
        <label htmlFor={id} className="text-[28px] leading-10 font-medium text-[#212121]">
            {label} {required && <span className="text-[#dd4438]">*</span>}
        </label>
        {children}
    </div>
);

const inputStyle = "h-20 w-full rounded-lg border-2 border-[#c8ced3] bg-white px-6 text-[27px] text-[#495057] outline-none placeholder:text-[#616972]";
const areaStyle = "block h-[154px] w-full resize rounded-lg border-2 border-[#c8ced3] bg-white px-6 py-4 text-[27px] leading-8 text-[#495057] outline-none placeholder:text-[#616972]";

const Drawer = () => (
    <section className="absolute inset-y-0 right-0 flex w-1/2 bg-white shadow-[0_0_60px_rgba(0,0,0,0.6)]">
        <div className="min-w-0 flex-1 overflow-hidden px-12 pt-12">
            <div className="flex items-start justify-between">
                <h1 className="text-[56px] leading-[64px] font-medium text-[#212121]">New Place</h1>
                <button aria-label="Close" className="mt-1.5 text-[#888888]"><CloseIcon size={40} stroke={2} /></button>
            </div>
            <p className="mt-[58px] text-[28px] leading-10 text-[#888888]">
                Fill in the name and address of a place, add a descriptions and some photos. Right-click on the map to relocate the pin without changing the address.
            </p>
            <div className="mt-6 flex gap-3">
                <button aria-label="Default language" className="flex size-[72px] items-center justify-center rounded-lg border-2 border-[#539fea] bg-[#f0f8ff] text-[#539fea]"><GlobeIcon /></button>
                <button aria-label="Polski" className="flex size-[72px] items-center justify-center">
                    <span className="flex h-9 w-12 flex-col justify-end bg-white"><span className="h-[18px] bg-[#b63136]"></span></span>
                </button>
            </div>

            <form className="px-2.5">
                <h2 className="mt-[37px] mb-[51px] text-2xl leading-8 font-medium tracking-wider text-[#2c5585]">PLACE DETAILS</h2>
                <Field id="name" label="Place Name" required>
                    <div className="relative">
                        <textarea id="name" placeholder="Name" className={areaStyle} />
                        <span className="absolute top-[18px] left-[26px] h-[34px] w-0.5 bg-[#495057]"></span>
                    </div>
                </Field>
                <Field id="website" label="Website">
                    <input id="website" type="text" placeholder="https://www.example.com" className={inputStyle} />
                </Field>
                <Field id="address" label="Address" required>
                    <input id="address" type="text" placeholder="43 Oxford Street, London" className={inputStyle} />
                </Field>
                <div className="mb-12"><Map /></div>
                <Field id="description" label="Description">
                    <textarea id="description" placeholder="Write some details about this place" className={areaStyle} />
                </Field>
            </form>
        </div>
        <div className="w-[11px] shrink-0 bg-[#eeeeee]"><div className="h-19/32 bg-[#539fea]"></div></div>
    </section>
);

const CookieButton = () => (
    <button aria-label="Cookies" className="absolute bottom-5 left-5 rounded-full shadow-[0_4px_16px_rgba(0,0,0,0.35)]">
        <svg width="92" height="92" viewBox="0 0 92 92" fill="#4a86f7">
            <circle cx="46" cy="46" r="46" fill="#1b1b1b" />
            <circle cx="46" cy="46" r="37.500" fill="none" stroke="#4a86f7" strokeWidth="5" />
            <circle cx="30.600" cy="32.700" r="8.800" />
            <circle cx="57.500" cy="27.300" r="4.700" />
            <circle cx="65.400" cy="51" r="7.800" />
            <circle cx="27.800" cy="56" r="3.700" />
            <circle cx="43.700" cy="68.700" r="5.800" />
        </svg>
    </button>
);

const ChatButton = () => (
    <button aria-label="Chat" className="absolute right-20 bottom-20 flex size-24 items-center justify-center rounded-full bg-[#c5e9fd] shadow-[0_4px_60px_rgba(0,0,0,0.1),0_2px_8px_rgba(0,0,0,0.15)]">
        <svg width="50" height="58" viewBox="0 0 50 58">
            <defs>
                <linearGradient id="bot" x1="0.700" y1="0" x2="0.400" y2="1">
                    <stop offset="0" stopColor="#8ef3fd" />
                    <stop offset="0.500" stopColor="#4a9bfa" />
                    <stop offset="1" stopColor="#3a78ee" />
                </linearGradient>
            </defs>
            <path d="M25 2l25 14v27L25 58 0 43V16z" fill="#14295e" />
            <path d="M25 1l25 14v26L25 55 0 41V15z" fill="url(#bot)" />
            <path d="M25 9l17 10v19L25 48 8 38V19z" fill="#101a30" />
            <g fill="#e8edf5">
                <circle cx="16" cy="24" r="5" />
                <circle cx="34" cy="24" r="5" />
            </g>
            <circle cx="16.500" cy="24" r="3" fill="#1c2a4a" />
            <circle cx="33.500" cy="24" r="3" fill="#1c2a4a" />
            <path d="M18 33q7 2 14 0-2 6-7 6t-7-6z" fill="#b5c0d4" />
            <path d="M20 36h10" stroke="#101a30" strokeWidth="1" />
        </svg>
        <span className="absolute -top-2.5 -right-2.5 flex size-10 items-center justify-center rounded-full bg-[#d93614] text-2xl font-medium text-white">1</span>
    </button>
);

const App = () => {
    return (
        <div className="flex h-screen flex-col overflow-hidden bg-white font-[Roboto,sans-serif]">
            <div className="h-[67px] shrink-0 bg-black"></div>
            <div className="relative flex min-h-0 flex-1 flex-col overflow-hidden">
                <Header />
                <div className="flex min-h-0 flex-1">
                    <Sidebar />
                    <Places />
                </div>
                <footer className="absolute bottom-[98px] left-0 flex h-[60px] w-1/2 items-center bg-white pl-[54px] text-2xl tracking-wider text-[#888888]">
                    <span>© MEETING APPLICATION 2025 | <a href="#" className="text-[#539fea]">LICENSES</a></span>
                </footer>
                <div className="absolute inset-0 bg-black/32"></div>
                <Drawer />
                <CookieButton />
                <ChatButton />
            </div>
        </div>
    );
};

export default App;
